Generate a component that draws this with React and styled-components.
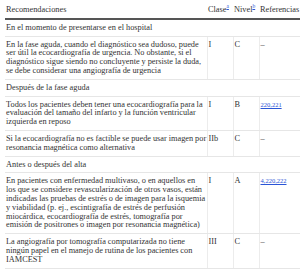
import React from "react";
import styled, { createGlobalStyle } from "styled-components";

const Global = createGlobalStyle`
  html, body { margin: 0; padding: 0; background: #fff; }
  body { font-family: "Liberation Serif", "Times New Roman", serif; color: #333; }
`;

const Wrap = styled.div`
  padding: 3px 6px 0 5px;
`;

const Table = styled.table`
  width: 289px;
  border-collapse: collapse;
  table-layout: fixed;
  font-family: "Liberation Serif", "Times New Roman", serif;
  color: #333;
  font-size: 8.3px;
  line-height: 8.8px;
  border-right: 1px solid #ececec;
`;

const Th = styled.th`
  text-align: left;
  font-weight: normal;
  padding: 3px 1px 3px 1px;
  border-bottom: 2px solid #555;
  white-space: nowrap;
  width: ${(p) => p.$w}px;
`;

const Td = styled.td`
  vertical-align: top;
  padding: ${(p) => (p.$first ? "4px 0 3px 1px" : "4px 1px 3px 1px")};
  word-spacing: ${(p) => (p.$first ? "-0.12px" : "normal")};
  border-bottom: 1px solid #e6e6e6;
  border-left: ${(p) => (p.$first ? "none" : "1px solid #ececec")};
`;

const SectionCell = styled.td`
  padding: 4px 1px 3px 1px;
  border-bottom: 1px solid #e6e6e6;
`;

const Sup = styled.a`
  color: #2a55d6;
  font-size: 5.5px;
  vertical-align: super;
  line-height: 0;
  text-decoration: underline;
`;

const Ref = styled.a`
  color: #2a55d6;
  font-size: 6.5px;
  text-decoration: underline;
`;

const sections = [
  {
    title: "En el momento de presentarse en el hospital",
    rows: [
      {
        text: "En la fase aguda, cuando el diagnóstico sea dudoso, puede ser útil la ecocardiografía de urgencia. No obstante, si el diagnóstico sigue siendo no concluyente y persiste la duda, se debe considerar una angiografía de urgencia",
        c: "I",
        n: "C",
        r: null,
      },
    ],
  },
  {
    title: "Después de la fase aguda",
    rows: [
      {
        text: "Todos los pacientes deben tener una ecocardiografía para la evaluación del tamaño del infarto y la función ventricular izquierda en reposo",
        c: "I",
        n: "B",
        r: "220,221",
      },
      {
        text: "Si la ecocardiografía no es factible se puede usar imagen por resonancia magnética como alternativa",
        c: "IIb",
        n: "C",
        r: null,
      },
    ],
  },
  {
    title: "Antes o después del alta",
    rows: [
      {
        text: "En pacientes con enfermedad multivaso, o en aquellos en los que se considere revascularización de otros vasos, están indicadas las pruebas de estrés o de imagen para la isquemia y viabilidad (p. ej., escintigrafía de estrés de perfusión miocárdica, ecocardiografía de estrés, tomografía por emisión de positrones o imagen por resonancia magnética)",
        c: "I",
        n: "A",
        r: "4,220,222",
      },
      {
        text: "La angiografía por tomografía computarizada no tiene ningún papel en el manejo de rutina de los pacientes con IAMCEST",
        c: "III",
        n: "C",
        r: null,
      },
    ],
  },
];

export default function App() {
  return (
    <Wrap>
      <Global />
      <Table>
        <thead>
          <tr>
            <Th $w={200}>Recomendaciones</Th>
            <Th $w={24}>
              Clase<Sup href="#a">a</Sup>
            </Th>
            <Th $w={24}>
              Nivel<Sup href="#b">b</Sup>
            </Th>
            <Th $w={41}>Referencias</Th>
          </tr>
        </thead>
        <tbody>
          {sections.map((s) => (
            <React.Fragment key={s.title}>
              <tr>
                <SectionCell colSpan={4}>{s.title}</SectionCell>
              </tr>
              {s.rows.map((r) => (
                <tr key={r.text}>
                  <Td $first>{r.text}</Td>
                  <Td>{r.c}</Td>
                  <Td>{r.n}</Td>
                  <Td>{r.r ? <Ref href="#r">{r.r}</Ref> : "–"}</Td>
                </tr>
              ))}
            </React.Fragment>
          ))}
        </tbody>
      </Table>
    </Wrap>
  );
}
